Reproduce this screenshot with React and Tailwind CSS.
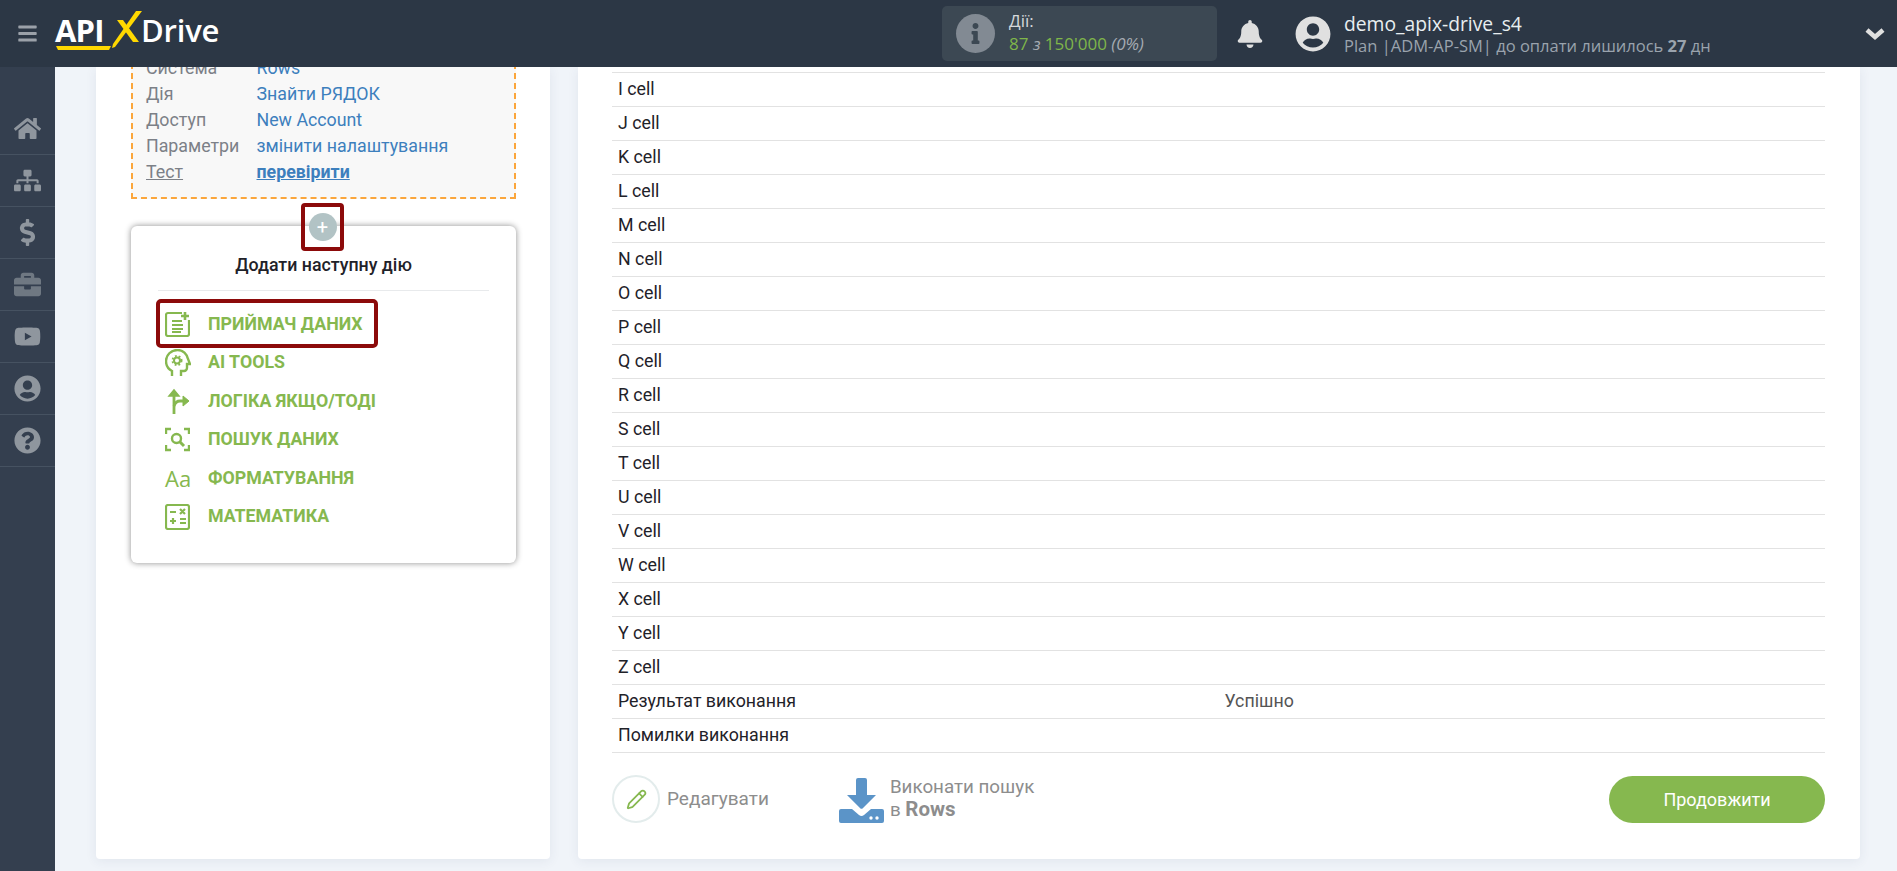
import React from "react";
import { FaHome, FaSitemap, FaDollarSign, FaBriefcase, FaYoutube, FaUserCircle, FaQuestionCircle, FaBell, FaInfo, FaBars } from "react-icons/fa";
import { Pencil } from "lucide-react";

const cells = "IJKLMNOPQRSTUVWXYZ".split("").map((c) => `${c} cell`);
const side = [FaHome, FaSitemap, FaDollarSign, FaBriefcase, FaYoutube, FaUserCircle, FaQuestionCircle];

const IconDoc = () => (
  <svg viewBox="0 0 25 26" className="w-[25px] h-[26px]" fill="none" stroke="#86b84f" strokeWidth="2.200">
    <path d="M17 2H3a2 2 0 0 0-2 2v19a2 2 0 0 0 2 2h19a2 2 0 0 0 2-2V9" />
    <path d="M7 10h10M7 14h11M7 18h11M7 21h9" strokeWidth="2" />
    <path d="M20 1v8M16 5h8" strokeWidth="2.600" />
  </svg>
);
const IconHead = () => (
  <svg viewBox="0 0 26 28" className="w-[26px] h-[28px]" fill="none" stroke="#86b84f" strokeWidth="2.400">
    <path d="M7 27v-5C3 20 1 16 1 12 1 6 6 1 12.500 1 18 1 22 5 23 10l2 5h-3v4a3 3 0 0 1-3 3h-3v5" />
    <circle cx="12" cy="11.500" r="3" strokeWidth="2" />
    <circle cx="12" cy="11.500" r="4.600" strokeWidth="1.800" strokeDasharray="1.800 2.010" />
  </svg>
);
const IconFork = () => (
  <svg viewBox="0 0 26 26" className="w-[26px] h-[26px]" fill="none" stroke="#86b84f" strokeWidth="2.800">
    <path d="M9 26V3" />
    <path d="M4 8l5-6 5 6z" fill="#86b84f" strokeWidth="1.500" />
    <path d="M9 18c1-3 3-5 6-5h4" />
    <path d="M18 8l6 5-6 5z" fill="#86b84f" strokeWidth="1" />
  </svg>
);
const IconScan = () => (
  <svg viewBox="0 0 25 25" className="w-[25px] h-[25px]" fill="none" stroke="#86b84f" strokeWidth="2.400">
    <path d="M1 7V2h5M19 2h5v5M1 18v5h5M19 23h5v-5" />
    <circle cx="11.500" cy="11.500" r="4.500" />
    <path d="M15 15l4 4" strokeWidth="3" />
  </svg>
);
const IconMath = () => (
  <svg viewBox="0 0 25 26" className="w-[25px] h-[26px]" fill="none" stroke="#86b84f" strokeWidth="2.200">
    <rect x="1" y="1" width="23" height="24" rx="2" />
    <path d="M5 8h6M15 5l5 5M20 5l-5 5M5 17h6M8 14v6M15 15h6M15 19h6" />
  </svg>
);
const IconAa = () => (
  <span className="w-[25px] text-[#86b84f] text-[22px] leading-none font-['Open_Sans',sans-serif] whitespace-nowrap">Aa</span>
);

const actions = [
  { label: "ПРИЙМАЧ ДАНИХ", Icon: IconDoc, boxed: true },
  { label: "AI TOOLS", Icon: IconHead },
  { label: "ЛОГІКА ЯКЩО/ТОДІ", Icon: IconFork },
  { label: "ПОШУК ДАНИХ", Icon: IconScan },
  { label: "ФОРМАТУВАННЯ", Icon: IconAa },
  { label: "МАТЕМАТИКА", Icon: IconMath },
];

const summary = [
  ["Система", "Rows"],
  ["Дія", "Знайти РЯДОК"],
  ["Доступ", "New Account"],
  ["Параметри", "змінити налаштування"],
];

function Logo() {
  return (
    <div className="relative w-[168px] h-[51px] ml-[18px] font-['Open_Sans',sans-serif] text-white">
      <span className="absolute left-[-1px] top-[4px] text-[31px] leading-[36px] font-bold tracking-[-0.8px]">API</span>
      <span className="absolute left-[85px] top-[4px] text-[31px] leading-[36px] font-semibold tracking-[-0.200px]">Drive</span>
      <svg viewBox="0 0 168 51" className="absolute inset-0 w-[168px] h-[51px]" fill="none">
        <path d="M0 38h55l-2 4H2z" fill="#ffd800" />
        <path d="M61 12h6l16 22h-6z" fill="#ffd800" />
        <path d="M56 40l1-4L80 3h6L59 39z" fill="#ffd800" />
      </svg>
    </div>
  );
}

export default function App() {
  return (
    <div className="w-[1897px] h-[871px] overflow-hidden flex flex-col bg-[#f0f4f9] font-['Roboto',sans-serif] text-[17.800px] text-[#1f2229]">
      <header className="h-[67px] shrink-0 bg-[#2c3745] flex items-center">
        <FaBars className="ml-[17px] w-[21px] h-[21px] text-[#9ba1a9]" />
        <Logo />
        <div className="ml-[718px] w-[275px] h-[55px] rounded-[5px] bg-[#3c4853] flex items-center font-['Open_Sans',sans-serif]">
          <span className="ml-[14px] w-[39px] h-[39px] rounded-full bg-[#828a93] flex items-center justify-center">
            <FaInfo className="w-[17px] h-[21px] text-[#3c4853]" />
          </span>
          <div className="ml-[14px] -mt-[3px] text-[17px] leading-[23px] text-[#d5d8db]">
            <div>Дії:</div>
            <div className="whitespace-nowrap"><span className="text-[#7fb64a]">87</span> <i className="text-[#a5abb2]">з</i> <span className="text-[#7fb64a]">150'000</span> <i className="text-[#a5abb2]">(0%)</i></div>
          </div>
        </div>
        <FaBell className="ml-[20px] w-[26px] h-[28px] text-[#dedede]" />
        <FaUserCircle className="ml-[32px] w-[36px] h-[36px] text-[#e0e0e0]" />
        <div className="ml-[13px] font-['Open_Sans',sans-serif] whitespace-nowrap">
          <div className="text-[19.300px] leading-[24px] text-[#e8eef0]">demo_apix-drive_s4</div>
          <div className="text-[16.500px] leading-[20px] text-[#9aa3ad]">Plan |ADM-AP-SM| до оплати лишилось <b>27</b> дн</div>
        </div>
        <svg viewBox="0 0 20 12" className="ml-auto mr-[12px] w-[20px] h-[12px]" fill="none" stroke="#e0e0e0" strokeWidth="4.500"><path d="M2 2l8 7 8-7" /></svg>
      </header>
      <div className="flex-1 min-h-0 flex">
        <nav className="w-[55px] shrink-0 bg-[#343f4f] pt-[36px]">
          {side.map((I, i) => (
            <div key={i} className="h-[52px] flex items-center justify-center border-b border-[#465261]">
              <I className={`w-[27px] h-[27px] ${i === 3 ? "text-[#6f7882]" : "text-[#8f969e]"}`} />
            </div>
          ))}
        </nav>
        <main className="flex-1 min-w-0 overflow-hidden flex gap-[28px] pl-[41px] pr-[37px] pb-[12px]">
          <section className="w-[454px] shrink-0 bg-white shadow-[0_2px_12px_rgba(50,70,100,0.08)] rounded-b-[4px] pl-[35px] pr-[34px]">
            <div className="-mt-[14px] h-[146px] bg-[#f8f8f8] border-2 border-dashed border-[#fba63c] pl-[13px] leading-[26px] overflow-hidden">
              {summary.map(([k, v]) => (
                <div key={k} className="flex h-[26px]"><span className="w-[110.500px] text-[#7c8087]">{k}</span><span className="text-[#3d7fbd]">{v}</span></div>
              ))}
              <div className="flex h-[26px]"><span className="w-[110.500px] text-[#7c8087] underline">Тест</span><span className="text-[#3d7fbd] font-bold underline">перевірити</span></div>
            </div>
            <div className="relative mt-[27px] h-[337px] rounded-[6px] bg-white shadow-[0_0_6px_rgba(0,0,0,0.45)] flex flex-col">
              <div className="absolute -top-[23px] left-[170px] w-[43px] h-[48px] border-4 border-[#8c0a0a] rounded-[4px] flex items-center justify-center">
                <span className="w-[28px] h-[28px] rounded-full bg-[#b2c3c5] text-white flex items-center justify-center text-[20px] leading-none">+</span>
              </div>
              <div className="mt-[29px] text-center font-medium leading-[20px]">Додати наступну дію</div>
              <div className="mx-[27px] mt-[15px] h-[1px] bg-[#e8eaec]" />
              <div className="mt-[14px] ml-[34px]">
                {actions.map(({ label, Icon, boxed }) => (
                  <div key={label} className="relative h-[38.500px] flex items-center">
                    {boxed && <div className="absolute -left-[9px] top-[-6px] w-[222px] h-[49px] border-4 border-[#8c0a0a] rounded-[5px]" />}
                    <div className="w-[43px] flex items-center"><Icon /></div>
                    <span className="font-bold text-[#86b84f] whitespace-nowrap">{label}</span>
                  </div>
                ))}
              </div>
            </div>
          </section>
          <section className="flex-1 min-w-0 bg-white shadow-[0_2px_12px_rgba(50,70,100,0.08)] rounded-b-[4px] pl-[34px] pr-[35px] flex flex-col">
            <div className="mt-[5px] border-t border-[#e2e2e2]">
              {cells.map((c) => (
                <div key={c} className="h-[34px] border-b border-[#e2e2e2] pl-[6px] leading-[31px]">{c}</div>
              ))}
              {[["Результат виконання", "Успішно"], ["Помилки виконання", ""]].map(([a, b]) => (
                <div key={a} className="h-[34px] border-b border-[#e2e2e2] grid grid-cols-2 leading-[31px]">
                  <span className="pl-[6px]">{a}</span>
                  <span className="pl-[6px] text-[#555]">{b}</span>
                </div>
              ))}
            </div>
            <div className="mt-[22px] flex items-center">
              <span className="w-[48px] h-[48px] rounded-full border-2 border-[#e3ecec] flex items-center justify-center">
                <Pencil className="w-[21px] h-[21px] text-[#86b84f]" strokeWidth={2} />
              </span>
              <span className="ml-[7px] text-[19px] text-[#8d8d8d]">Редагувати</span>
              <svg viewBox="0 0 45 45" className="ml-[70px] mt-[2px] w-[45px] h-[45px]" fill="#5b94c8">
                <path d="M17 2a2 2 0 0 1 2-2h7a2 2 0 0 1 2 2v15h9L24 30a2 2 0 0 1-3 0L8 17h9z" />
                <path d="M2 31h11l7 6a4 4 0 0 0 5 0l7-6h11a2 2 0 0 1 2 2v10a2 2 0 0 1-2 2H2a2 2 0 0 1-2-2V33a2 2 0 0 1 2-2z" />
                <circle cx="32" cy="40" r="1.700" fill="#fff" /><circle cx="38" cy="40" r="1.700" fill="#fff" />
              </svg>
              <div className="ml-[6px] -mt-[1px] text-[18.800px] leading-[22px] text-[#8d8d8d]">
                <div>Виконати пошук</div>
                <div>в <b className="text-[20.500px]">Rows</b></div>
              </div>
              <button className="ml-auto w-[216px] h-[47px] rounded-full bg-[#86b84f] text-white text-[18px]">Продовжити</button>
            </div>
          </section>
        </main>
      </div>
    </div>
  );
}
